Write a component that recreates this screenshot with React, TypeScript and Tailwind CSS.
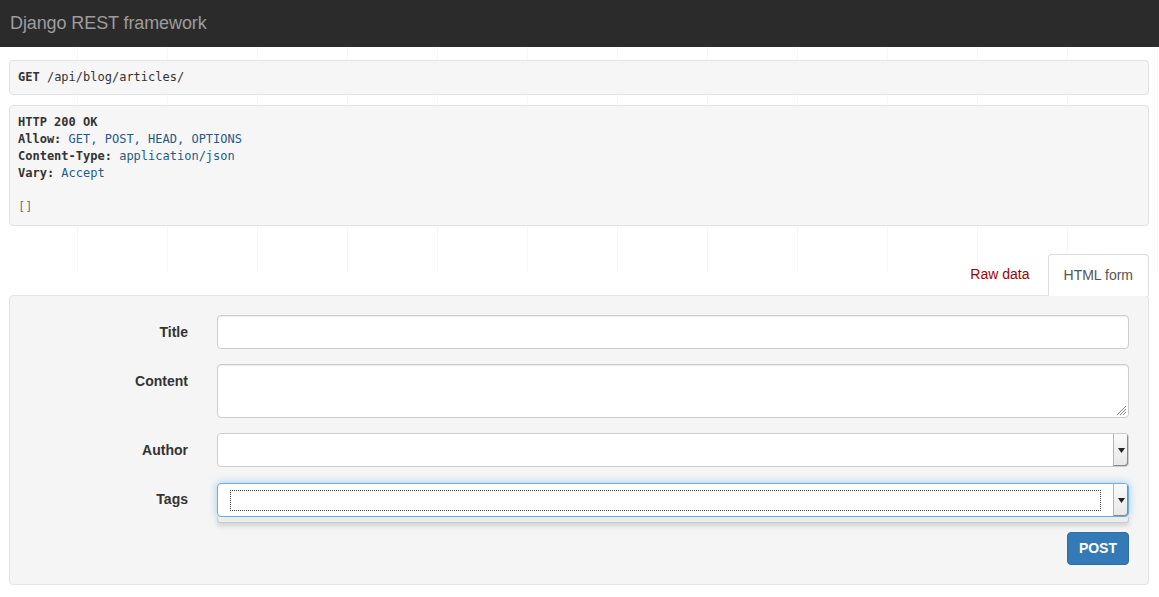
import { useEffect } from 'react';

function SelectArrow() {
  return (
    <div className="w-[15px] h-full flex items-center justify-center bg-[linear-gradient(#fafafa,#e8e8e8)] border-l border-[#b5b5b5] rounded-r-[3px] shadow-[inset_-1px_-1px_0_#8a8a8a]">
      <svg width="7" height="5" viewBox="0 0 7 5">
        <path d="M0 0 L7 0 L3.5 5 Z" fill="#222" />
      </svg>
    </div>
  );
}

function App() {
  useEffect(() => {
    document.title = 'Django REST framework';
  }, []);

  const labelCls =
    'w-[187px] shrink-0 pr-[14px] pl-[15px] text-right text-[14px] font-bold text-[#333] leading-5';

  return (
    <div className="min-h-screen bg-white font-['Liberation_Sans',Arial,sans-serif]">
      {/* navbar */}
      <div className="h-[47px] bg-[#2b2b2b] flex items-center px-[10px]">
        <span className="text-[18px] text-[#9d9d9d] tracking-[-0.1px]">Django REST framework</span>
      </div>

      <div className="pl-[9px] pr-[10px] pt-[13px] bg-no-repeat bg-[length:100%_225px] bg-[repeating-linear-gradient(90deg,transparent_0,transparent_77px,#f7f7f7_77px,#f7f7f7_78px,transparent_78px,transparent_90px)]">
        {/* request */}
        <div className="bg-[#f6f6f7] border border-[#e1e1e8] rounded-[4px] px-[8px] py-[8px] font-['DejaVu_Sans_Mono',monospace] text-[12px] leading-[17px] text-[#333]">
          <b>GET</b> /api/blog/articles/
        </div>

        {/* response */}
        <div className="mt-[10px] bg-[#f6f6f7] border border-[#e1e1e8] rounded-[4px] px-[8px] pt-[8px] pb-[9px] font-['DejaVu_Sans_Mono',monospace] text-[12px] leading-[17px] text-[#333]">
          <div>
            <b>HTTP 200 OK</b>
          </div>
          <div>
            <b>Allow:</b> <span className="text-[#1f5a8a]">GET, POST, HEAD, OPTIONS</span>
          </div>
          <div>
            <b>Content-Type:</b> <span className="text-[#1f5a8a]">application/json</span>
          </div>
          <div>
            <b>Vary:</b> <span className="text-[#1f5a8a]">Accept</span>
          </div>
          <div>&nbsp;</div>
          <div className="text-[#777]">[]</div>
        </div>

        {/* tabs */}
        <div className="mt-[27px] flex justify-end items-end">
          <div className="px-[15px] py-[10px] mr-[2px] text-[14px] leading-5 text-[#a30000] border border-transparent">
            Raw data
          </div>
          <div className="px-[15px] py-[10px] text-[14px] leading-5 text-[#555] bg-white border border-[#ddd] border-b-white rounded-t-[4px] relative z-10 -mb-px">
            HTML form
          </div>
        </div>

        {/* form well */}
        <div className="bg-[#f5f5f5] border border-[#e3e3e3] rounded-[4px] pl-[5px] pr-[4px] pt-[19px] pb-[19px]">
          <div className="flex items-center mb-[15px]">
            <div className={labelCls}>Title</div>
            <div className="flex-1 px-[15px]">
              <div className="h-[34px] bg-white border border-[#ccc] rounded-[4px] shadow-[inset_0_1px_1px_rgba(0,0,0,0.075)]" />
            </div>
          </div>

          <div className="flex items-start mb-[15px]">
            <div className={labelCls + ' pt-[7px]'}>Content</div>
            <div className="flex-1 px-[15px]">
              <div className="h-[54px] bg-white border border-[#ccc] rounded-[4px] shadow-[inset_0_1px_1px_rgba(0,0,0,0.075)] flex items-end justify-end p-[2px]">
                <svg width="10" height="10" viewBox="0 0 10 10">
                  <path d="M10 1 L1 10 M10 4 L4 10 M10 7 L7 10" stroke="#888" strokeWidth="1" />
                </svg>
              </div>
            </div>
          </div>

          <div className="flex items-center mb-[16px]">
            <div className={labelCls}>Author</div>
            <div className="flex-1 px-[15px]">
              <div className="h-[34px] bg-white border border-[#ccc] rounded-[4px] flex justify-end">
                <SelectArrow />
              </div>
            </div>
          </div>

          <div className="flex items-start">
            <div className={labelCls + ' pt-[6px]'}>Tags</div>
            <div className="flex-1 px-[15px]">
              <div className="relative">
                <div className="h-[34px] bg-white border border-[#66afe9] rounded-[4px] shadow-[0_0_8px_rgba(102,175,233,0.6)] flex items-center pl-[12px]">
                  <div className="flex-1 h-[21px] border border-dotted border-[#444]" />
                  <div className="w-[12px]" />
                  <SelectArrow />
                </div>
                <div className="h-[6px] bg-[#ececec] border border-t-0 border-[#ccc] rounded-b-[3px] shadow-[0_3px_5px_rgba(0,0,0,0.15)]" />
              </div>
            </div>
          </div>

          <div className="flex justify-end px-[15px] mt-[9px]">
            <div className="h-[33px] px-[11px] flex items-center bg-[#337ab7] border border-[#2e6da4] rounded-[4px] text-white text-[14px] font-bold">
              POST
            </div>
          </div>
        </div>
      </div>
    </div>
  );
}

export default App;
